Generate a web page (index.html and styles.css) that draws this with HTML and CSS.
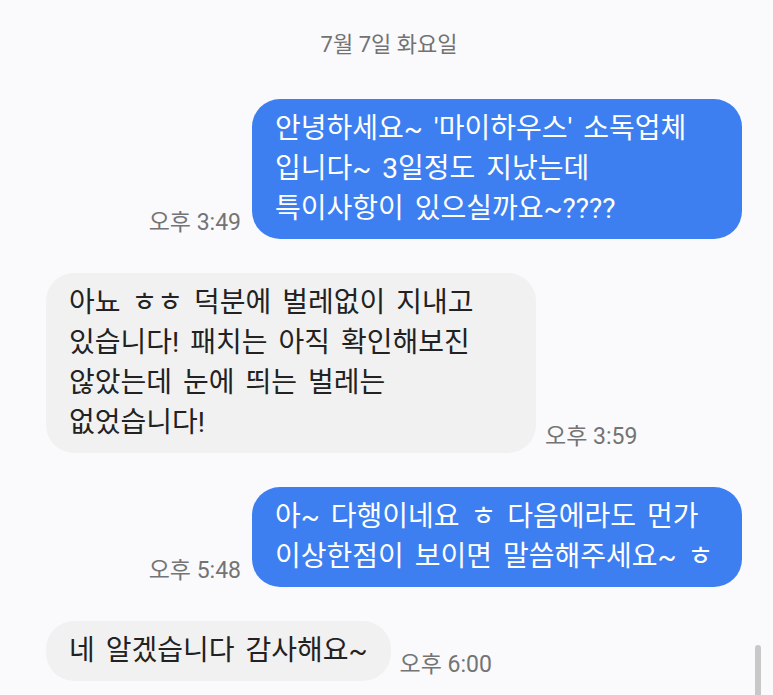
FILE: index.html
```html
<!DOCTYPE html>
<html lang="ko">
<head>
  <meta charset="UTF-8">
  <meta name="viewport" content="width=device-width, initial-scale=1.0">
  <title>대화</title>
  <link rel="stylesheet" href="styles.css">
</head>
<body>
  <div class="chat">
    <div class="date">7월 7일 화요일</div>
    <div class="messages">
      <div class="row sent">
        <span class="time">오후 3:49</span>
        <div class="bubble">안녕하세요~ '마이하우스' 소독업체 입니다~ 3일정도 지났는데 특이사항이 있으실까요~????</div>
      </div>
      <div class="row received">
        <div class="bubble">아뇨 ㅎㅎ 덕분에 벌레없이 지내고 있습니다! 패치는 아직 확인해보진 않았는데 눈에 띄는 벌레는 없었습니다!</div>
        <span class="time">오후 3:59</span>
      </div>
      <div class="row sent">
        <span class="time">오후 5:48</span>
        <div class="bubble">아~ 다행이네요 ㅎ 다음에라도 먼가 이상한점이 보이면 말씀해주세요~ ㅎ</div>
      </div>
      <div class="row received">
        <div class="bubble">네 알겠습니다 감사해요~</div>
        <span class="time">오후 6:00</span>
      </div>
    </div>
    <div class="scrollbar"></div>
  </div>
</body>
</html>
```

FILE: styles.css
```css
body {
  margin: 0;
  background: #fafafc;
  font-family: Roboto, "Noto Sans CJK KR", sans-serif;
  overflow: hidden;
}
.chat {
  position: relative;
  height: 695px;
  padding: 33px 31px 0 46px;
  box-sizing: border-box;
}
.date {
  text-align: center;
  font-size: 22px;
  line-height: 24px;
  color: #727272;
  margin: 0 0 42px -10px;
}
.messages {
  display: flex;
  flex-direction: column;
  gap: 34px;
}
.row {
  display: flex;
  align-items: flex-end;
  gap: 11px;
}
.row.sent {
  justify-content: flex-end;
}
.bubble {
  max-width: 490px;
  box-sizing: border-box;
  padding: 10px 23px;
  border-radius: 28px;
  font-size: 28px;
  line-height: 40px;
  word-spacing: 4px;
  word-break: keep-all;
}
.sent .bubble {
  background: #3d7ff0;
  color: #fff;
}
.received .bubble {
  background: #f1f1f1;
  color: #222;
}
.time {
  font-size: 23px;
  line-height: 24px;
  color: #747474;
  margin-bottom: 4px;
  white-space: nowrap;
}
.received .time {
  margin-left: -2px;
}
.scrollbar {
  position: absolute;
  right: 12px;
  top: 645px;
  width: 6px;
  height: 60px;
  border-radius: 3px;
  background: #c8c8c8;
}
```
